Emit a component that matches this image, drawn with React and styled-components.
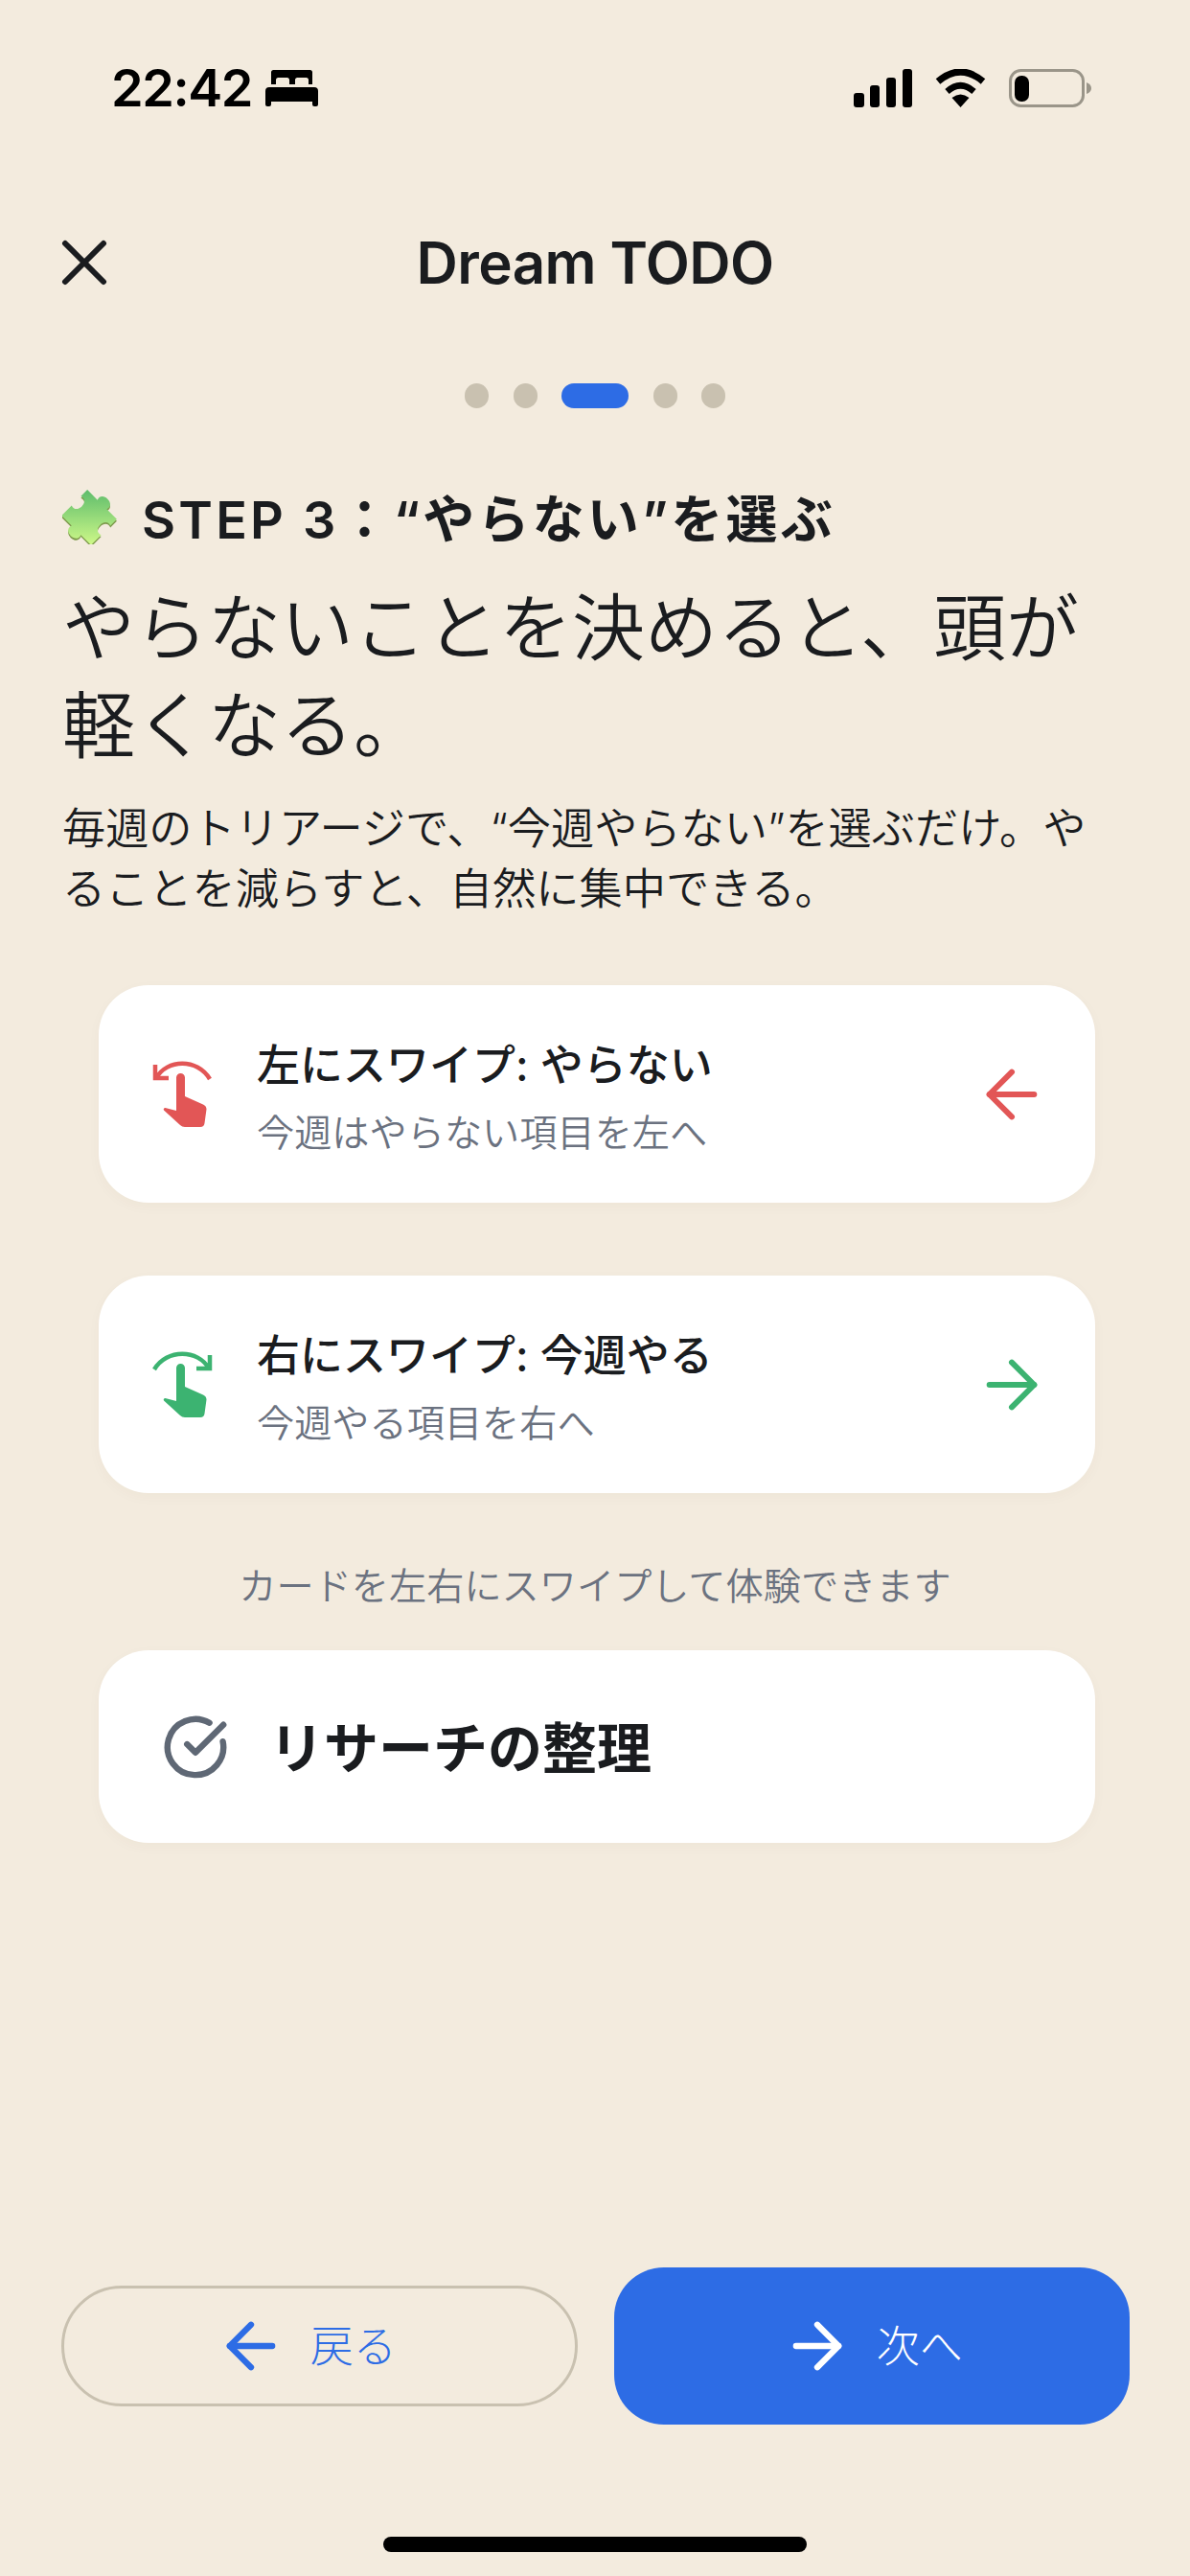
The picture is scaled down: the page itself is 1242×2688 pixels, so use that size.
import React from "react";
import styled, { createGlobalStyle } from "styled-components";
import { ArrowLeft, ArrowRight, CircleCheckBig, X } from "lucide-react";

const GlobalStyle = createGlobalStyle`
    html, body {
        margin: 0;
        padding: 0;
        background: #f3ebde;
    }
    * {
        box-sizing: border-box;
    }
`;

const Page = styled.div`
    width: 1242px;
    height: 2688px;
    display: flex;
    flex-direction: column;
    overflow: hidden;
    background: #f3ebde;
    color: #1a1c1f;
    font-family: Inter, "Noto Sans CJK JP", sans-serif;
`;

const StatusBar = styled.div`
    height: 112px;
    padding: 72px 103px 0 116px;
    display: flex;
    justify-content: space-between;
    align-items: center;
`;

const StatusLeft = styled.div`
    display: flex;
    align-items: center;
    gap: 14px;
`;

const StatusRight = styled.div`
    display: flex;
    align-items: center;
    gap: 24px;
`;

const Time = styled.span`
    font-size: 54px;
    line-height: 40px;
    font-weight: 600;
    letter-spacing: -1.4px;
    color: #000;
`;

const Header = styled.header`
    margin-top: 118px;
    height: 88px;
    padding: 0 48px;
    display: grid;
    grid-template-columns: 1fr auto 1fr;
    align-items: center;
`;

const Title = styled.h1`
    margin: 0;
    font-size: 60px;
    line-height: 88px;
    font-weight: 600;
    letter-spacing: -0.6px;
    color: #1a1c1f;
`;

const Dots = styled.div`
    margin-top: 82px;
    display: flex;
    justify-content: center;
    gap: 25.500px;
`;

const Dot = styled.span`
    width: ${props => (props.$active ? "70px" : "25px")};
    height: 26px;
    border-radius: 13px;
    background: ${props => (props.$active ? "#2d6ce5" : "#c9c1b0")};
`;

const Intro = styled.section`
    margin-top: 82px;
    padding: 0 65px;
`;

const StepLine = styled.div`
    display: flex;
    align-items: center;
    gap: 23px;
    height: 60px;
    font-size: 54px;
    font-weight: 600;
    letter-spacing: 3.200px;
    white-space: nowrap;
`;

const Headline = styled.h2`
    margin: 36px 0 0;
    font-size: 76px;
    line-height: 102px;
    font-weight: 350;
    width: 1114px;
`;

const Lead = styled.p`
    margin: 25px 0 0;
    font-size: 45.200px;
    line-height: 63px;
    font-weight: 350;
    width: 1090px;
`;

const Cards = styled.div`
    margin-top: 69px;
    padding: 0 99px 0 103px;
    display: flex;
    flex-direction: column;
    gap: 76px;
`;

const SwipeCard = styled.div`
    height: 227px;
    padding: 0 47px 0 55px;
    display: flex;
    align-items: center;
    gap: 46px;
    background: #fff;
    border-radius: 52px;
    box-shadow: 0 4px 14px rgba(90, 70, 40, 0.03);
`;

const SwipeText = styled.div`
    flex: 1;
    padding-top: 8px;
    display: flex;
    flex-direction: column;
    gap: 17px;
`;

const SwipeTitle = styled.div`
    font-size: 45px;
    line-height: 56px;
    font-weight: 500;
`;

const SwipeNote = styled.div`
    font-size: 39.200px;
    line-height: 50px;
    font-weight: 350;
    color: #6b7280;
`;

const HandSvg = styled.svg`
    flex: none;
    width: 64px;
    height: 76px;
    margin-top: 4px;
    color: ${props => props.$color};
`;

const ArrowSlot = styled.span`
    display: flex;
    color: ${props => props.$color};
`;

const Hint = styled.div`
    margin-top: 72px;
    text-align: center;
    font-size: 39.200px;
    line-height: 50px;
    font-weight: 350;
    color: #6b7280;
`;

const TaskCard = styled.div`
    margin: 42px 99px 0 103px;
    height: 201px;
    padding: 0 0 0 66px;
    display: flex;
    align-items: center;
    gap: 42px;
    background: #fff;
    border-radius: 52px;
    box-shadow: 0 4px 14px rgba(90, 70, 40, 0.03);
    font-size: 57px;
    font-weight: 600;
    color: #5f6875;
`;

const TaskLabel = styled.span`
    padding-bottom: 6px;
    color: #1a1c1f;
`;

const Footer = styled.footer`
    margin-top: auto;
    padding: 0 63px 0 64px;
    display: grid;
    grid-template-columns: 1fr 1fr;
    align-items: center;
    gap: 38px;
`;

const NavButton = styled.div`
    height: ${props => (props.$primary ? "164px" : "126px")};
    padding-right: ${props => (props.$primary ? "0" : "29px")};
    display: flex;
    align-items: center;
    justify-content: center;
    gap: 24px;
    font-size: 45px;
    font-weight: 300;
    color: ${props => (props.$primary ? "#fff" : "#2d6ce5")};
    background: ${props => (props.$primary ? "#2d6ce5" : "transparent")};
    border: ${props => (props.$primary ? "none" : "3px solid #c9c1b0")};
    border-radius: ${props => (props.$primary ? "52px" : "63px")};
`;

const NavLabel = styled.span`
    padding-bottom: 6px;
`;

const HomeBar = styled.div`
    flex: none;
    width: 442px;
    height: 16px;
    margin: 117px auto 25px;
    border-radius: 8px;
    background: #000;
`;

const BedIcon = () => (
    <svg width="55" height="38" viewBox="0 0 55 38">
        <path
            fill="#000"
            d="M6 2.5A2.5 2.5 0 0 1 8.5 0h38A2.5 2.5 0 0 1 49 2.5V15h-4v-4.5A2.5 2.5 0 0 0 42.5 8h-9A2.5 2.5 0 0 0 31 10.5V15h-6v-4.5A2.5 2.5 0 0 0 22.500 8h-9A2.5 2.5 0 0 0 11 10.500V15H6zM4 18h47a4 4 0 0 1 4 4v14a2 2 0 0 1-2 2h-2a2 2 0 0 1-2-2v-3H6v3a2 2 0 0 1-2 2H2a2 2 0 0 1-2-2V22a4 4 0 0 1 4-4z"
        />
    </svg>
);

const SignalIcon = () => (
    <svg width="61" height="40" viewBox="0 0 61 40">
        <rect x="0" y="25" width="11" height="15" rx="3" fill="#000" />
        <rect x="17" y="17" width="10" height="23" rx="3" fill="#000" />
        <rect x="34" y="9" width="10" height="31" rx="3" fill="#000" />
        <rect x="51" y="0" width="10" height="40" rx="3" fill="#000" />
    </svg>
);

const WifiIcon = () => (
    <svg width="53" height="40" viewBox="0 0 53 40">
        <path d="M3 13Q26.500 -7 50 13" fill="none" stroke="#000" strokeWidth="7" />
        <path d="M12.500 23.500Q26.500 11 40.500 23.500" fill="none" stroke="#000" strokeWidth="6.500" />
        <path d="M26.500 40L17.500 30Q26.500 23 35.500 30Z" fill="#000" />
    </svg>
);

const BatteryIcon = () => (
    <svg width="86" height="40" viewBox="0 0 86 40">
        <rect x="1.500" y="1.500" width="76" height="37" rx="11" fill="none" stroke="#9a9589" strokeWidth="3" />
        <rect x="6" y="7" width="15" height="27" rx="7" fill="#000" />
        <path d="M81 14Q86 16 86 20Q86 24 81 26Z" fill="#9a9589" />
    </svg>
);

const PuzzleIcon = () => (
    <svg width="60" height="60" viewBox="0 0 60 60">
        <defs>
            <linearGradient
                id="puzzleFill"
                gradientUnits="userSpaceOnUse"
                x1="30"
                y1="8"
                x2="30"
                y2="52"
                gradientTransform="rotate(-45 30 30)"
            >
                <stop offset="0" stopColor="#58b96a" />
                <stop offset="1" stopColor="#cdf888" />
            </linearGradient>
        </defs>
        <g transform="translate(30 30) rotate(45) scale(1.360) translate(-30 -30)">
            <path
                transform="translate(1 1)"
                fill="#7d9a4c"
                d="M14 18H25c-3-8 13-8 10 0H46V25c-8-3-8 13 0 10V46H35c3 8-13 8-10 0H14V35c8 3 8-13 0-10Z"
            />
            <path
                fill="url(#puzzleFill)"
                d="M14 18H25c-3-8 13-8 10 0H46V25c-8-3-8 13 0 10V46H35c3 8-13 8-10 0H14V35c8 3 8-13 0-10Z"
            />
        </g>
    </svg>
);

const HandIcon = ({ direction, color }) => (
    <HandSvg viewBox="0 0 64 76" $color={color}>
        {direction === "left" ? (
            <path d="M4 5V19H18M5 19C16 -1 48 -2 61 20" fill="none" stroke="currentColor" strokeWidth="4.500" />
        ) : (
            <path d="M61 5V19H47M60 19C49 -1 16 -2 3 20" fill="none" stroke="currentColor" strokeWidth="4.500" />
        )}
        <path
            fill="currentColor"
            d="M26 18.500a4.500 4.500 0 0 1 9 0V38L54 46.500Q57.500 48 57.500 51.500L55.500 66Q55 70 51 70H35Q32 70 30 68L13 52.500Q12 50.500 14.500 50L26 53Z"
        />
    </HandSvg>
);

const SwipeRow = ({ direction, color, title, note }) => {
    const Arrow = direction === "left" ? ArrowLeft : ArrowRight;
    return (
        <SwipeCard>
            <HandIcon direction={direction} color={color} />
            <SwipeText>
                <SwipeTitle>{title}</SwipeTitle>
                <SwipeNote>{note}</SwipeNote>
            </SwipeText>
            <ArrowSlot $color={color}>
                <Arrow size={80} strokeWidth={1.8} />
            </ArrowSlot>
        </SwipeCard>
    );
};

const App = () => (
    <Page>
        <GlobalStyle />
        <StatusBar>
            <StatusLeft>
                <Time>22:42</Time>
                <BedIcon />
            </StatusLeft>
            <StatusRight>
                <SignalIcon />
                <WifiIcon />
                <BatteryIcon />
            </StatusRight>
        </StatusBar>
        <Header>
            <X size={80} strokeWidth={1.8} color="#1a1c1f" />
            <Title>Dream TODO</Title>
        </Header>
        <Dots>
            <Dot />
            <Dot />
            <Dot $active />
            <Dot />
            <Dot />
        </Dots>
        <Intro>
            <StepLine>
                <PuzzleIcon />
                <span>STEP 3：“やらない”を選ぶ</span>
            </StepLine>
            <Headline>やらないことを決めると、頭が軽くなる。</Headline>
            <Lead>毎週のトリアージで、“今週やらない”を選ぶだけ。やることを減らすと、自然に集中できる。</Lead>
        </Intro>
        <Cards>
            <SwipeRow direction="left" color="#e25656" title="左にスワイプ: やらない" note="今週はやらない項目を左へ" />
            <SwipeRow direction="right" color="#3cb371" title="右にスワイプ: 今週やる" note="今週やる項目を右へ" />
        </Cards>
        <Hint>カードを左右にスワイプして体験できます</Hint>
        <TaskCard>
            <CircleCheckBig size={70} strokeWidth={2.2} />
            <TaskLabel>リサーチの整理</TaskLabel>
        </TaskCard>
        <Footer>
            <NavButton>
                <ArrowLeft size={76} strokeWidth={2} />
                <NavLabel>戻る</NavLabel>
            </NavButton>
            <NavButton $primary>
                <ArrowRight size={76} strokeWidth={2} />
                <NavLabel>次へ</NavLabel>
            </NavButton>
        </Footer>
        <HomeBar />
    </Page>
);

export default App;
